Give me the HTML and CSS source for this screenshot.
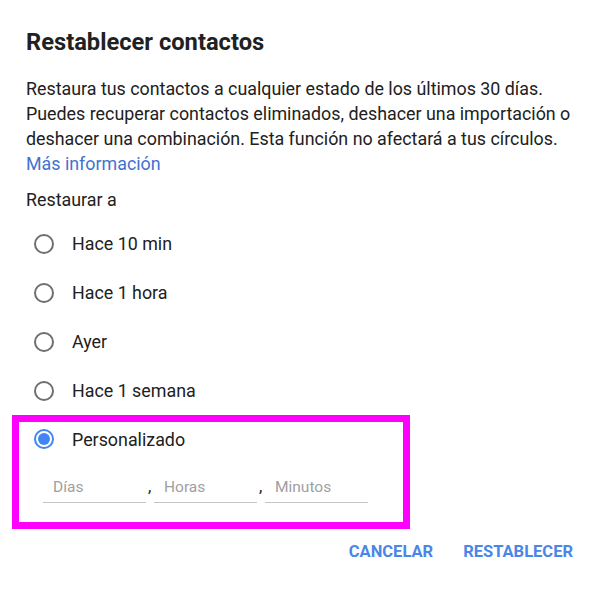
FILE: index.html
```html
<!DOCTYPE html>
<html lang="es">
<head>
<meta charset="utf-8">
<title>Restablecer contactos</title>
<link rel="stylesheet" href="styles.css">
</head>
<body>
<div class="dialog">
  <h1 class="title">Restablecer contactos</h1>
  <p class="desc">Restaura tus contactos a cualquier estado de los últimos 30 días. Puedes recuperar contactos eliminados, deshacer una importación o deshacer una combinación. Esta función no afectará a tus círculos.<br><a class="link" href="#">Más información</a></p>
  <div class="label">Restaurar a</div>
  <div class="options">
    <label class="option"><span class="radio"></span><span class="opt-text">Hace 10 min</span></label>
    <label class="option"><span class="radio"></span><span class="opt-text">Hace 1 hora</span></label>
    <label class="option"><span class="radio"></span><span class="opt-text">Ayer</span></label>
    <label class="option"><span class="radio"></span><span class="opt-text">Hace 1 semana</span></label>
  </div>
  <div class="highlight">
    <label class="option option-custom"><span class="radio radio-on"></span><span class="opt-text">Personalizado</span></label>
    <div class="fields">
      <div class="field"><span class="ph">Días</span></div>
      <span class="comma">,</span>
      <div class="field"><span class="ph">Horas</span></div>
      <span class="comma">,</span>
      <div class="field"><span class="ph">Minutos</span></div>
    </div>
  </div>
  <div class="actions">
    <button class="btn">CANCELAR</button>
    <button class="btn">RESTABLECER</button>
  </div>
</div>
</body>
</html>
```
FILE: styles.css
```css
html, body {
  margin: 0;
  padding: 0;
  background: #ffffff;
}
body {
  font-family: Roboto, "Noto Sans", "Liberation Sans", sans-serif;
  color: #212121;
  width: 600px;
  height: 592px;
  overflow: hidden;
}
.dialog {
  padding: 28px 26px 0 26px;
}
.title {
  margin: 0;
  font-size: 23.7px;
  line-height: 28px;
  font-weight: 700;
  color: #212121;
}
.desc {
  margin: 20px -16px 0 0;
  font-size: 17.85px;
  line-height: 25px;
  color: #212121;
}
.link {
  color: #4272d0;
  text-decoration: none;
}
.label {
  margin-top: 11px;
  font-size: 17.85px;
  line-height: 26px;
}
.options {
  display: flex;
  flex-direction: column;
  margin-top: 6px;
}
.option {
  display: flex;
  align-items: center;
  height: 49px;
  padding-left: 8px;
  font-size: 17.85px;
}
.radio {
  box-sizing: border-box;
  width: 20px;
  height: 20px;
  border: 2px solid #6f6f6f;
  border-radius: 50%;
  flex: none;
}
.radio-on {
  border-color: #4285f4;
  display: flex;
  align-items: center;
  justify-content: center;
}
.radio-on::after {
  content: "";
  width: 12px;
  height: 12px;
  border-radius: 50%;
  background: #4285f4;
}
.opt-text {
  margin-left: 18px;
}
.highlight {
  margin-left: -14px;
  width: 398px;
  box-sizing: border-box;
  border: 7px solid #ff00ff;
  padding: 0 0 19px 0;
}
.option-custom {
  height: 34px;
  padding-left: 15px;
}
.fields {
  display: flex;
  align-items: flex-end;
  margin-top: 14px;
  padding-left: 24px;
}
.field {
  width: 103px;
  height: 33px;
  box-sizing: border-box;
  border-bottom: 1px solid #c4c4c4;
  padding-left: 10px;
  display: flex;
  align-items: center;
  padding-top: 1px;
}
.ph {
  font-size: 15.5px;
  color: #a0a0a0;
}
.comma {
  width: 8px;
  font-size: 17px;
  line-height: 33px;
  padding-left: 2px;
  box-sizing: border-box;
  color: #212121;
}
.actions {
  display: flex;
  justify-content: flex-end;
  gap: 0;
  margin-top: 4px;
  margin-right: -14px;
}
.btn {
  background: none;
  border: none;
  height: 36px;
  padding: 0 15px;
  font-family: Roboto, "Noto Sans", "Liberation Sans", sans-serif;
  font-size: 16.5px;
  font-weight: 700;
  color: #4a86e8;
  letter-spacing: 0;
}
```
